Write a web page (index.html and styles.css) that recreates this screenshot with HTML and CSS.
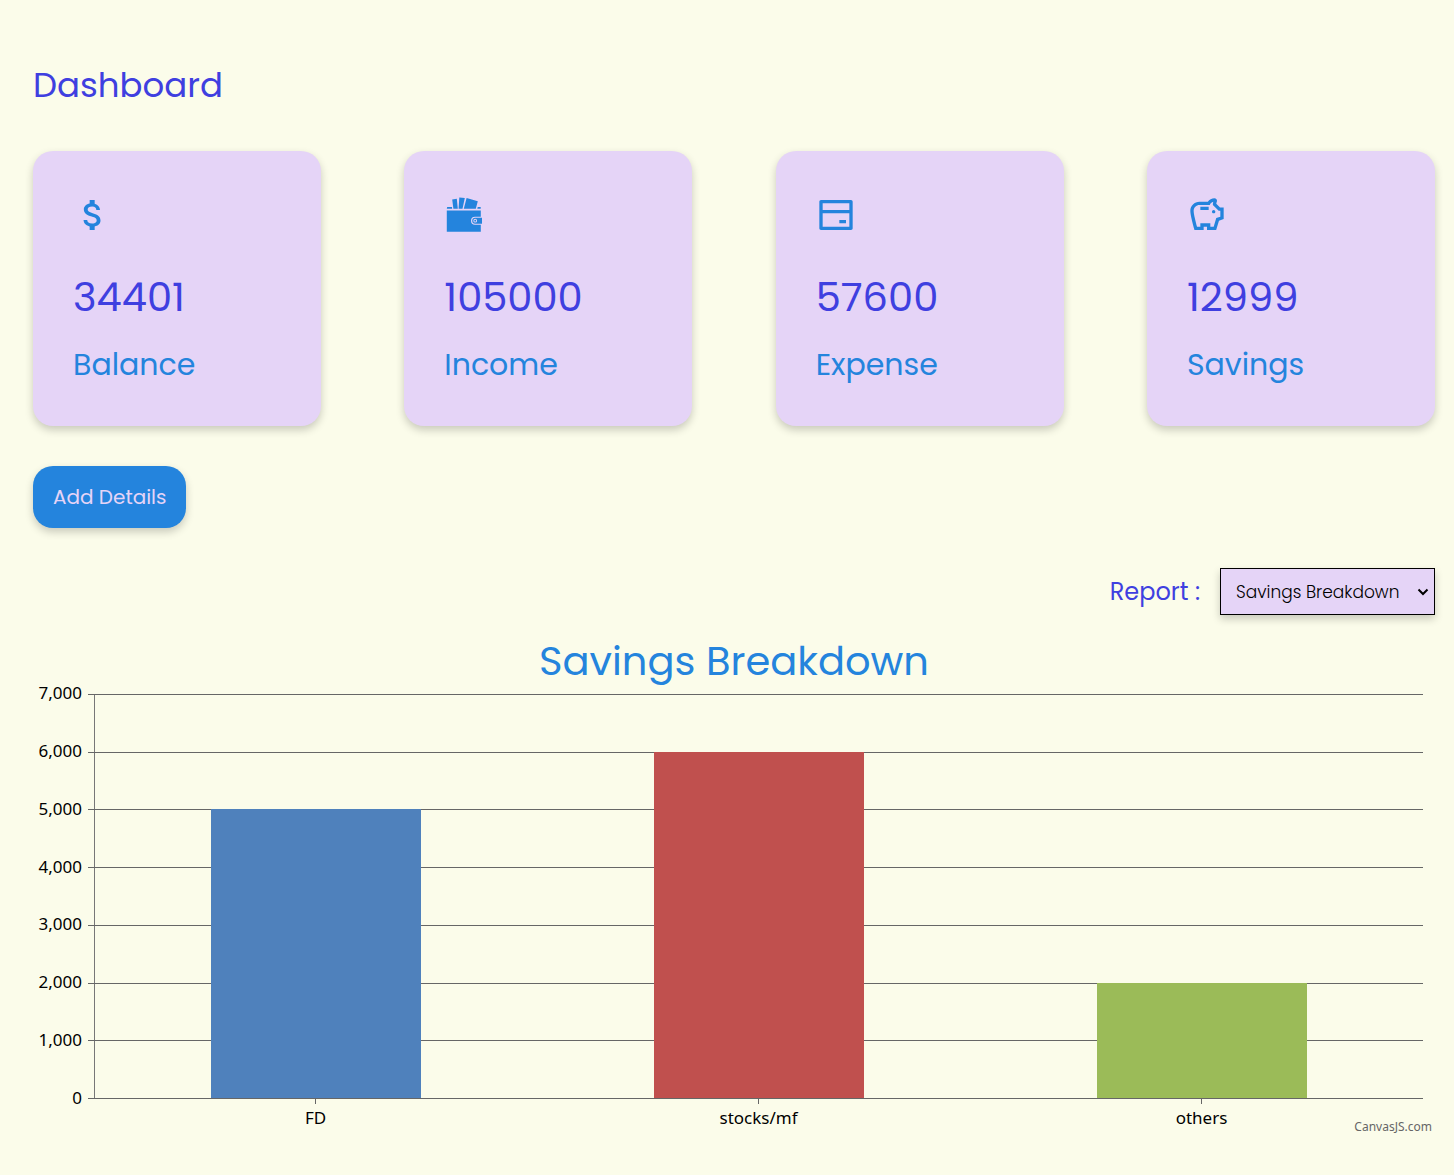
FILE: index.html
```html
<!DOCTYPE html>
<html lang="en">
<head>
<meta charset="utf-8">
<meta name="viewport" content="width=device-width, initial-scale=1">
<title>Dashboard</title>
<link rel="stylesheet" href="styles.css">
</head>
<body>
<main class="dashboard">
  <h1 class="page-title">Dashboard</h1>

  <section class="cards" aria-label="Summary">
    <article class="card">
      <svg class="card-icon" viewBox="0 0 24 24" aria-hidden="true"><path d="M11.8 10.9c-2.27-.59-3-1.2-3-2.15 0-1.09 1.01-1.85 2.7-1.85 1.78 0 2.44.85 2.5 2.1h2.21c-.07-1.72-1.12-3.3-3.21-3.81V3h-3v2.16c-1.94.42-3.5 1.68-3.5 3.61 0 2.31 1.91 3.46 4.7 4.13 2.5.6 3 1.48 3 2.41 0 .69-.49 1.79-2.7 1.79-2.06 0-2.87-.92-2.98-2.1h-2.2c.12 2.19 1.76 3.42 3.68 3.83V21h3v-2.15c1.95-.37 3.5-1.5 3.5-3.55 0-2.84-2.43-3.81-4.7-4.4z"/></svg>
      <p class="card-value">34401</p>
      <h2 class="card-label">Balance</h2>
    </article>
    <article class="card">
      <svg class="card-icon" viewBox="0 0 40 40" aria-hidden="true"><path d="M8.2 4.600l4.600-.8 1 9.900H9.400z M15.300 2.400l5.500.5-2.300 10.800h-3.900z M22.600 2.900l11.200 3.400-2 7.400H19.800z M3.200 12h4.800l.2 1.700H2.800z M33.700 12h3v1.700h-3.400z M2.800 15.500h34v6.200h-5.800a4 4 0 0 0 0 8h5.800v7h-34z M31.200 22.700h6.800v6h-6.800a3 3 0 0 1 0-6z M31.200 23.800a1.900 1.900 0 1 0 0 3.800 1.900 1.900 0 0 0 0-3.800z M31.200 24.800a.9.9 0 1 1 0 1.800.9.9 0 0 1 0-1.800z" fill-rule="evenodd"/></svg>
      <p class="card-value">105000</p>
      <h2 class="card-label">Income</h2>
    </article>
    <article class="card">
      <svg class="card-icon" viewBox="0 0 24 24" aria-hidden="true"><path d="M3 3H21C21.550 3 22 3.450 22 4V20C22 20.550 21.550 21 21 21H3C2.450 21 2 20.550 2 20V4C2 3.450 2.450 3 3 3ZM20 11H4V19H20V11ZM20 9V5H4V9H20ZM14 15H18V17H14V15Z"/></svg>
      <p class="card-value">57600</p>
      <h2 class="card-label">Expense</h2>
    </article>
    <article class="card">
      <svg class="card-icon" viewBox="0 0 24 24" aria-hidden="true"><path d="M15,10c0-0.55,0.45-1,1-1s1,0.45,1,1s-0.45,1-1,1S15,10.55,15,10z M8,9h5V7H8V9z M22,7.5v6.97l-2.82,0.94L17.5,21H12v-2h-2v2H4.5C4.5,21,2,12.54,2,9.5C2,6.46,4.46,4,7.5,4h5c0.91-1.21,2.36-2,4-2C17.33,2,18,2.67,18,3.5c0,0.21-0.04,0.4-0.12,0.58c-0.14,0.34-0.26,0.73-0.32,1.15l2.27,2.27H22z M20,9.5h-1L15.5,6c0-0.65,0.09-1.29,0.26-1.91C14.79,4.34,14,5.06,13.67,6H7.5C5.57,6,4,7.57,4,9.5c0,1.88,1.22,6.65,2.01,9.5H8v-2h6v2h2.01l1.55-5.15L20,13.03V9.5z"/></svg>
      <p class="card-value">12999</p>
      <h2 class="card-label">Savings</h2>
    </article>
  </section>

  <button class="add-button" type="button">Add Details</button>

  <div class="report">
    <label class="report-label" for="report">Report :</label>
    <div class="report-field">
      <select class="report-select" id="report">
        <option>Savings Breakdown</option>
        <option>Expense Breakdown</option>
        <option>Income Breakdown</option>
      </select>
      <svg class="report-chevron" viewBox="0 0 12 8" aria-hidden="true"><path d="M1.500 1.500L6 6l4.500-4.500"/></svg>
    </div>
  </div>

  <section class="chart" aria-labelledby="chart-title">
    <h2 class="chart-title" id="chart-title">Savings Breakdown</h2>
    <div class="chart-body">
      <div class="y-labels">
        <span>7,000</span><span>6,000</span><span>5,000</span><span>4,000</span><span>3,000</span><span>2,000</span><span>1,000</span><span>0</span>
      </div>
      <div class="plot">
        <div class="gridlines"><i></i><i></i><i></i><i></i><i></i><i></i><i></i><i></i></div>
        <div class="bars">
          <div class="bar bar-fd" style="height: 71.43%"></div>
          <div class="bar bar-stocks" style="height: 85.71%"></div>
          <div class="bar bar-others" style="height: 28.57%"></div>
        </div>
      </div>
      <div class="x-labels"><span>FD</span><span>stocks/mf</span><span>others</span></div>
    </div>
    <a class="credit" href="#">CanvasJS.com</a>
  </section>
</main>
</body>
</html>
```
FILE: styles.css
```css
* {
  box-sizing: border-box;
}

body {
  margin: 0;
  background: #fbfcea;
  color: #3f3fe0;
  font-family: Poppins, Inter, "Open Sans", sans-serif;
}

h1,
h2,
p {
  margin: 0;
  font-weight: 400;
}

.dashboard {
  display: flex;
  flex-direction: column;
  padding: 58px 19px 37px 33px;
}

.page-title {
  margin-bottom: 39px;
  font-size: 34px;
  line-height: 54px;
}

.cards {
  display: flex;
  justify-content: space-between;
  margin-bottom: 40px;
}

.card {
  width: 288px;
  padding: 40px;
  border-radius: 20px;
  background: #e5d4f7;
  box-shadow: 0 4px 8px rgba(0, 0, 0, 0.2);
}

.card-icon {
  display: block;
  width: 40px;
  height: 40px;
  margin: 4px 0 32px;
  fill: #2484dd;
}

.card-value {
  margin-bottom: 17px;
  font-size: 40px;
  line-height: 60px;
}

.card-label {
  color: #2484dd;
  font-size: 30px;
  line-height: 42px;
}

.add-button {
  align-self: flex-start;
  margin-bottom: 40px;
  padding: 16px 20px;
  border: 0;
  border-radius: 20px;
  background: #2484dd;
  box-shadow: 0 4px 8px rgba(0, 0, 0, 0.2);
  color: #e5d4f7;
  font: inherit;
  font-size: 20px;
  line-height: 30px;
}

.report {
  display: flex;
  align-items: center;
  justify-content: flex-end;
  gap: 20px;
  margin-bottom: 24px;
}

.report-label {
  font-size: 24px;
}

.report-field {
  display: grid;
  align-items: center;
}

.report-select,
.report-chevron {
  grid-area: 1 / 1;
}

.report-select {
  width: 215px;
  height: 47px;
  padding: 0 15px;
  border: 1px solid #000;
  border-radius: 0;
  background: #e5d4f7;
  box-shadow: 0 4px 8px rgba(0, 0, 0, 0.2);
  color: #000;
  font: inherit;
  font-size: 17px;
  font-weight: 300;
  appearance: none;
}

.report-chevron {
  justify-self: end;
  width: 12px;
  height: 8px;
  margin-right: 6px;
  fill: none;
  stroke: #000;
  stroke-width: 2;
  pointer-events: none;
}

.chart {
  display: flex;
  flex-direction: column;
  color: #000;
  font-family: "Noto Sans", sans-serif;
}

.chart-title {
  margin-bottom: 11px;
  color: #2484dd;
  font-family: Poppins, Inter, "Open Sans", sans-serif;
  font-size: 40px;
  line-height: 44px;
  text-align: center;
}

.chart-body {
  display: grid;
  grid-template-columns: 49px 1fr;
  grid-template-rows: 405px auto;
  column-gap: 12px;
  margin-right: 12px;
  font-size: 17px;
  line-height: 20px;
}

.y-labels {
  display: flex;
  flex-direction: column;
  justify-content: space-between;
  margin: -11px 0 -9px;
  text-align: right;
}

.plot {
  display: grid;
  border-left: 1px solid #777;
}

.gridlines,
.bars {
  grid-area: 1 / 1;
}

.gridlines {
  display: flex;
  flex-direction: column;
  justify-content: space-between;
  margin-left: -7px;
}

.gridlines i {
  height: 1px;
  background: #666;
}

.bars {
  display: grid;
  grid-template-columns: repeat(3, 1fr);
  align-items: end;
  justify-items: center;
  margin-bottom: 1px;
}

.bar {
  width: 210px;
}

.bar-fd {
  background: #4f81bc;
}

.bar-stocks {
  background: #c0504e;
}

.bar-others {
  background: #9bbb58;
}

.x-labels {
  display: grid;
  grid-column: 2;
  grid-template-columns: repeat(3, 1fr);
  text-align: center;
}

.x-labels span::before {
  display: block;
  width: 1px;
  height: 5px;
  margin: 0 auto 4px;
  background: #666;
  content: "";
}

.credit {
  align-self: flex-end;
  margin: -9px 3px 0 0;
  color: #666;
  font-size: 12px;
  line-height: 16px;
  text-decoration: none;
}
```
